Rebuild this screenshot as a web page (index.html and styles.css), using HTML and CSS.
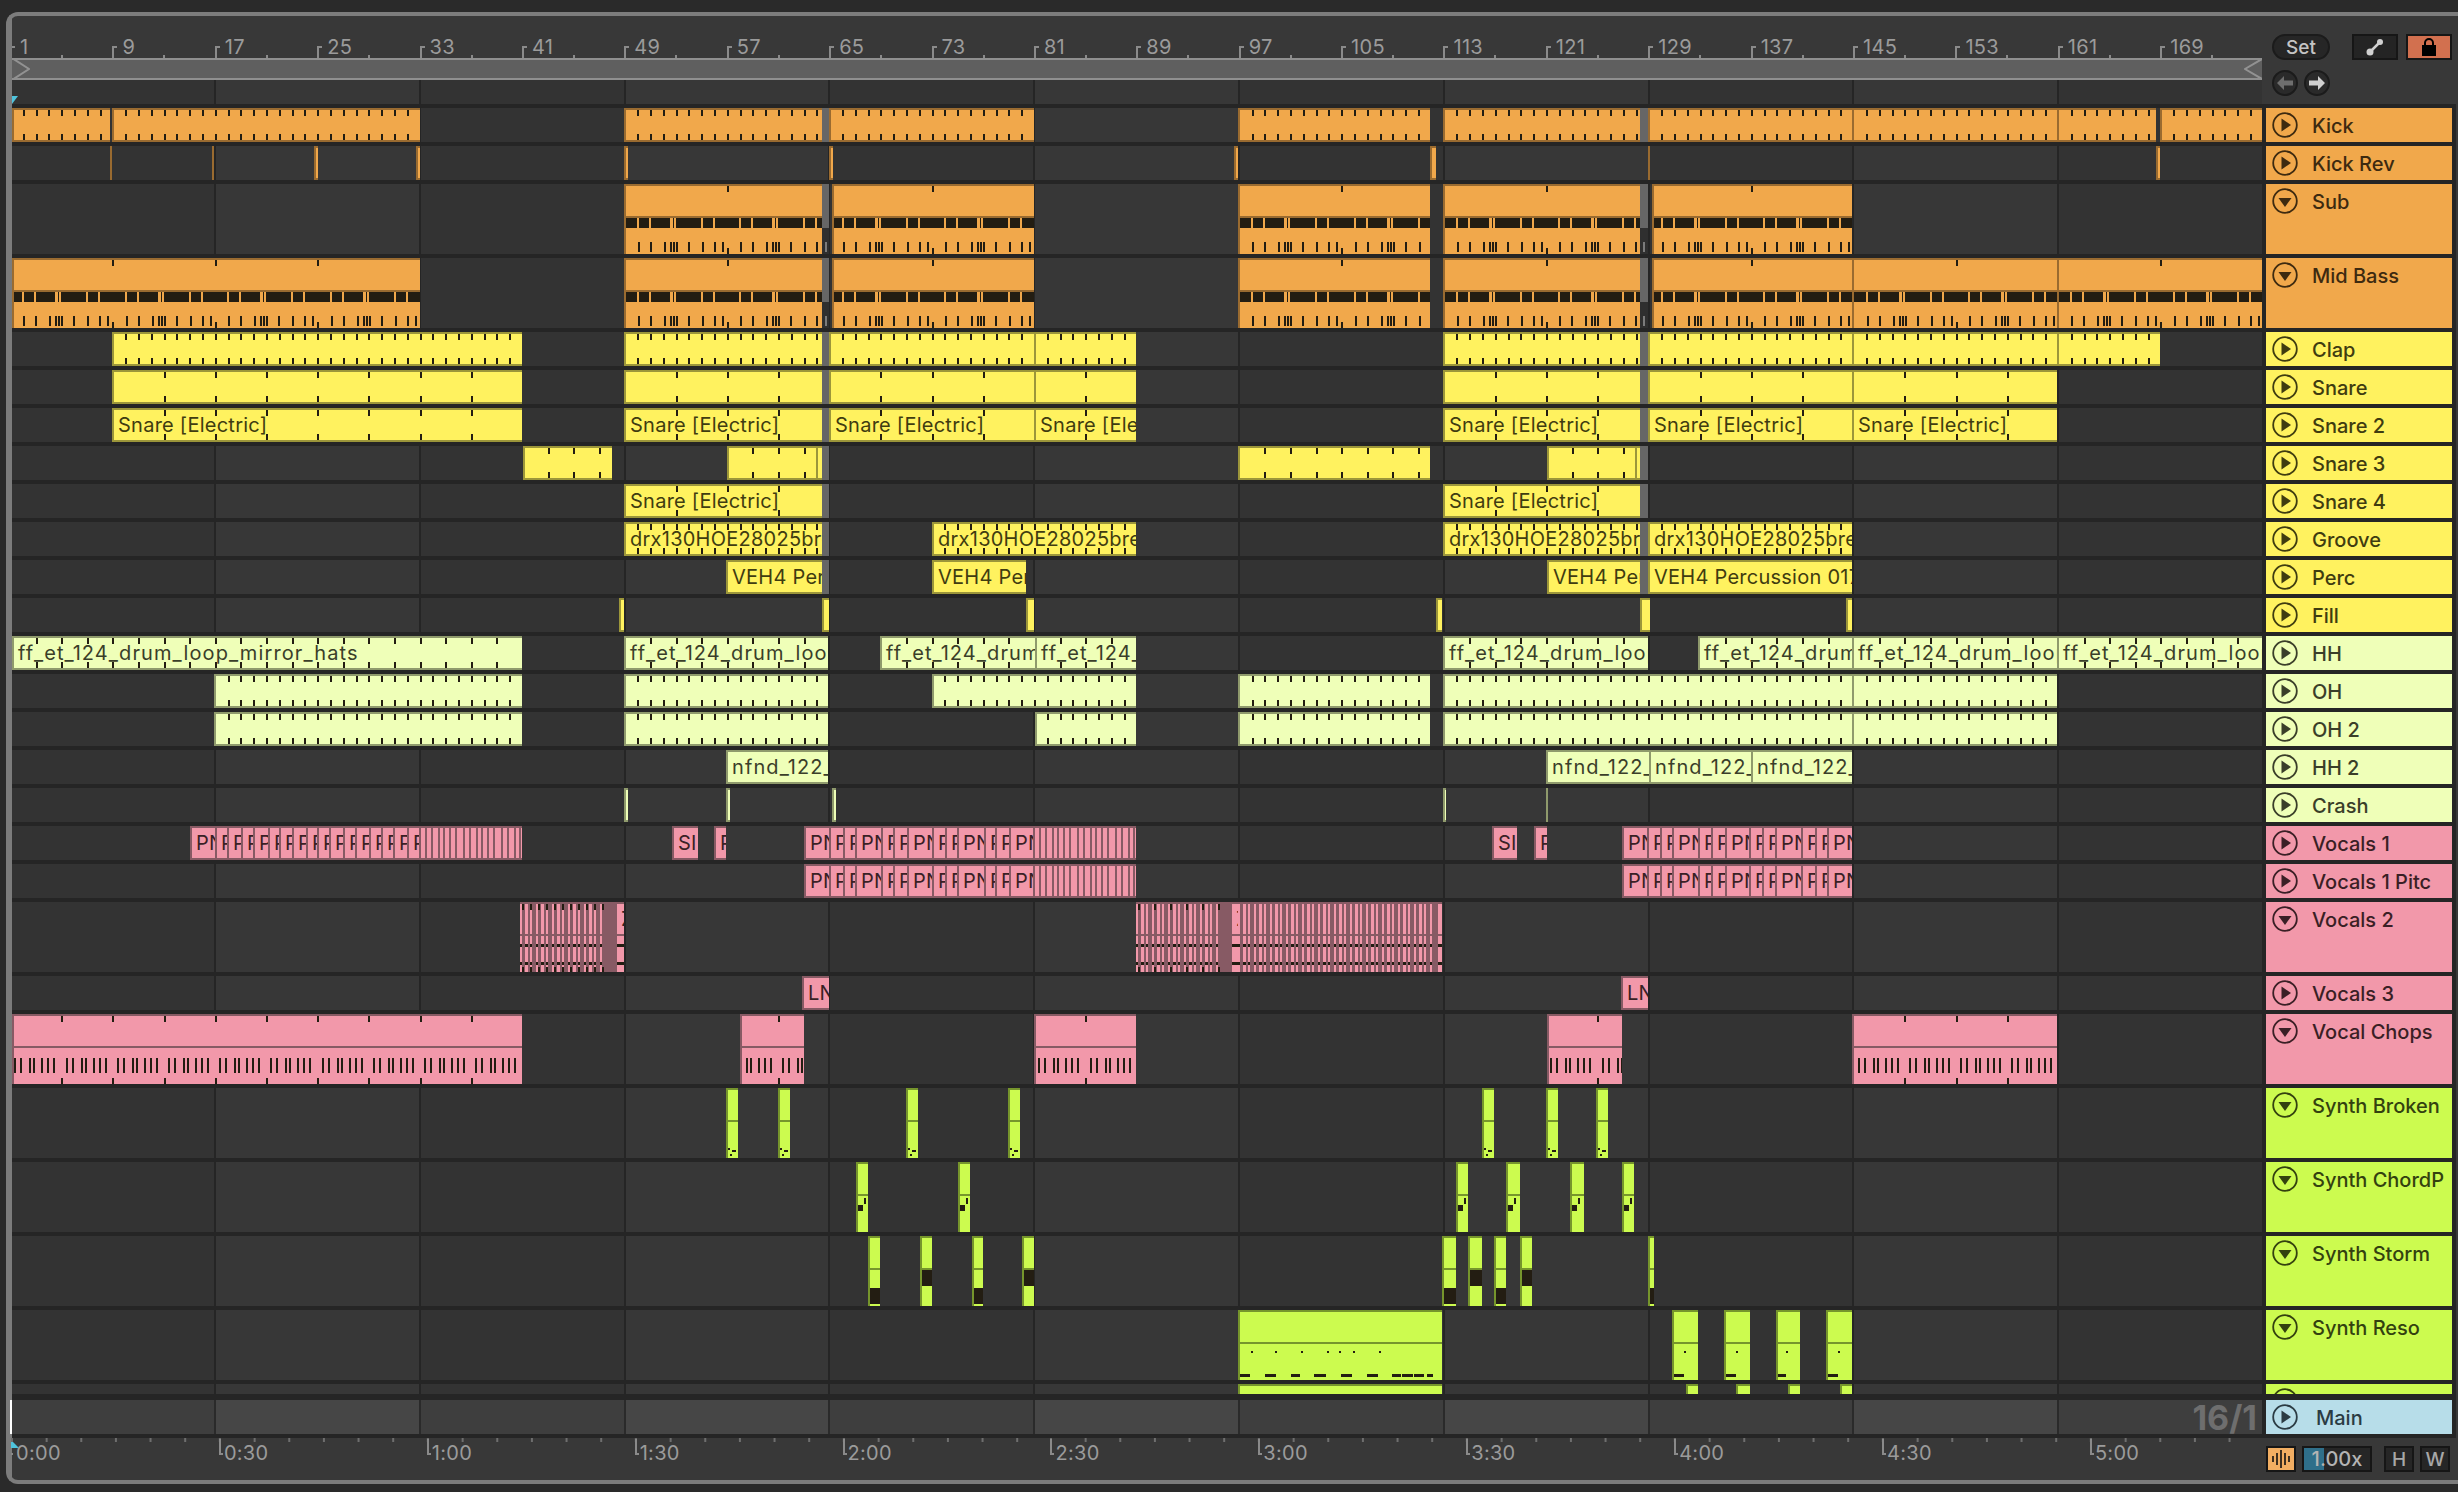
FILE: index.html
```html
<!DOCTYPE html>
<html lang="en">
<head>
    <meta charset="UTF-8">
    <meta name="viewport" content="width=device-width, initial-scale=1.0">
    <title>Arrangement View</title>
    <link rel="stylesheet" href="styles.css">
</head>
<body>
    <div class="frame">
        <div class="top">
            <div class="timeline">
                <div class="ruler" id="barRuler"></div>
                <div class="scrub">
                    <svg width="18" height="22"><path d="M0 0 L17 11 L0 22" fill="none" stroke="#929292" stroke-width="2"/></svg>
                    <svg width="18" height="22"><path d="M18 1 L1 11 L18 21" fill="none" stroke="#929292" stroke-width="2"/></svg>
                </div>
                <div class="locators">
                    <svg width="6" height="8"><path d="M0 0 H6 L0 8 Z" fill="#4fc3dc"/></svg>
                </div>
            </div>
            <div class="controls">
                <div class="controls-row">
                    <button class="set-btn">Set</button>
                    <button class="square-btn link-btn">
                        <svg width="20" height="20" viewBox="0 0 20 20">
                            <path d="M5 15 L15 5" stroke="#d0d0d0" stroke-width="2.5"/>
                            <circle cx="5" cy="15" r="3.5" fill="#d0d0d0"/>
                            <circle cx="15" cy="5" r="3" fill="#d0d0d0"/>
                        </svg>
                    </button>
                    <button class="square-btn lock-btn">
                        <svg width="16" height="20" viewBox="0 0 16 20">
                            <path d="M4 9 V6 A4 4 0 0 1 12 6 V9" fill="none" stroke="#000" stroke-width="2"/>
                            <rect x="1" y="8" width="14" height="11" fill="#000"/>
                        </svg>
                    </button>
                </div>
                <div class="controls-row arrows">
                    <button class="round-btn">
                        <svg width="18" height="16" viewBox="0 0 18 16"><path d="M1 8 L8 1 V5.5 H17 V10.5 H8 V15 Z" fill="#6e6e6e"/></svg>
                    </button>
                    <button class="round-btn">
                        <svg width="18" height="16" viewBox="0 0 18 16"><path d="M17 8 L10 1 V5.5 H1 V10.5 H10 V15 Z" fill="#d0d0d0"/></svg>
                    </button>
                </div>
            </div>
        </div>

        <div class="arrange">
            <div class="tracks" id="tracks"></div>
            <div class="track main-track">
                <div class="lane main-lane"><span class="grid-size">16/1</span></div>
                <div class="head blue">
                    <svg class="fold" width="26" height="26" viewBox="0 0 26 26">
                        <circle cx="13" cy="13" r="11.8" fill="none" stroke="currentColor" stroke-width="1.8"/>
                        <path d="M9.5 6.5 L19 13 L9.5 19.5 Z" fill="currentColor"/>
                    </svg>
                    <span class="track-name main-name">Main</span>
                </div>
            </div>
        </div>

        <div class="bottom">
            <div class="time-ruler">
                <svg class="playhead" width="8" height="8"><path d="M0 0 L8 8 H0 Z" fill="#4fc3dc"/></svg>
                <div class="time-cells" id="timeRuler"></div>
            </div>
            <div class="bottom-controls">
                <button class="small-btn wave-btn">
                    <svg width="20" height="20" viewBox="0 0 20 20">
                        <path d="M2 7 V13 M6 4 V16 M10 1 V19 M14 4 V16 M18 7 V13" stroke="#111" stroke-width="1.6"/>
                    </svg>
                </button>
                <div class="tempo"><span class="tempo-fill"></span><span class="tempo-text">1.00x</span></div>
                <button class="small-btn letter-btn h-btn">H</button>
                <button class="small-btn letter-btn">W</button>
            </div>
        </div>
    </div>

    <script src="app.js"></script>
</body>
</html>
```

FILE: styles.css
```css
html, body {
    margin: 0;
    width: 2458px;
    height: 1492px;
    overflow: hidden;
    background: #2a2a2a;
    font-family: Inter, "Noto Sans", sans-serif;
}
button {
    font-family: inherit;
    padding: 0;
    cursor: pointer;
}
.frame {
    box-sizing: border-box;
    width: 2452px;
    height: 1472px;
    margin: 12px 0 0 6px;
    padding-left: 2px;
    border: solid #7c7c7c;
    border-width: 4px 0 4px 4px;
    border-radius: 12px 0 0 12px;
    background: linear-gradient(90deg, #7c7c7c 2px, #383838 2px);
    overflow: hidden;
}

/* top: ruler, scrub bar, controls */
.top {
    display: flex;
    height: 88px;
}
.timeline {
    width: 2250px;
    flex: none;
    overflow: hidden;
}
.ruler {
    display: flex;
    height: 42px;
    margin-left: -2px;
}
.bar-cell {
    position: relative;
    flex: none;
    box-sizing: border-box;
    width: 102.4px;
    padding: 21px 0 0 10px;
    font-size: 20px;
    line-height: 21px;
    letter-spacing: 0.3px;
    color: #9b9b9b;
}
.bar-cell::before {
    content: "";
    position: absolute;
    left: 0;
    bottom: 0;
    width: 3px;
    height: 10px;
    border: solid #8a8a8a;
    border-width: 2px 0 0 2px;
}
.bar-cell::after {
    content: "";
    position: absolute;
    left: 51px;
    bottom: 0;
    width: 2px;
    height: 3px;
    background: #8a8a8a;
}
.scrub {
    display: flex;
    justify-content: space-between;
    box-sizing: border-box;
    height: 22px;
    border-top: 2px solid #8f8f8f;
    border-bottom: 2px solid #8f8f8f;
    background: #5f5f5f;
    overflow: hidden;
}
.scrub svg {
    margin-top: -2px;
}
.locators {
    display: flex;
    align-items: flex-end;
    height: 24px;
    background: repeating-linear-gradient(90deg, #333 0, #333 202px, #252525 202px, #252525 204px, #373737 204px, #373737 406.8px, #252525 406.8px, #252525 408.8px, #333 408.8px, #333 409.6px);
}
.locators svg {
    display: block;
}
.controls {
    display: flex;
    flex-direction: column;
    gap: 10px;
    padding: 18px 0 0 10px;
}
.controls-row {
    display: flex;
    align-items: center;
    height: 26px;
}
.set-btn {
    width: 58px;
    height: 26px;
    border: 2px solid #1b1b1b;
    border-radius: 13px;
    background: #262626;
    color: #c4c4c4;
    font-size: 19px;
    font-weight: 500;
    margin-right: 22px;
}
.square-btn {
    display: flex;
    align-items: center;
    justify-content: center;
    box-sizing: border-box;
    width: 46px;
    height: 26px;
    border: 2px solid #161616;
}
.link-btn {
    background: #242424;
    margin-right: 8px;
}
.lock-btn {
    background: #d2704f;
}
.arrows {
    gap: 6px;
}
.round-btn {
    display: flex;
    align-items: center;
    justify-content: center;
    box-sizing: border-box;
    width: 26px;
    height: 26px;
    border: 2px solid #1b1b1b;
    border-radius: 50%;
    background: #2a2a2a;
}

/* track rows */
.arrange {
    width: 2444px;
    background: #252525;
    padding: 4px 0;
}
.tracks {
    display: flex;
    flex-direction: column;
    gap: 4px;
    height: 1286px;
    overflow: hidden;
}
.track {
    display: flex;
    flex: none;
    gap: 4px;
    height: 34px;
}
.track.tall {
    height: 70px;
}
.lane {
    position: relative;
    flex: none;
    width: 2250px;
    overflow: hidden;
    background: repeating-linear-gradient(90deg, #333 0, #333 202px, #252525 202px, #252525 204px, #373737 204px, #373737 406.8px, #252525 406.8px, #252525 408.8px, #333 408.8px, #333 409.6px);
}
.head {
    display: flex;
    align-items: flex-start;
    flex: none;
    gap: 14px;
    box-sizing: border-box;
    width: 186px;
    padding: 4px 0 0 6px;
    background: var(--fill);
    color: var(--ink);
    overflow: hidden;
}
.fold {
    flex: none;
}
.track-name {
    margin-top: 1px;
    font-size: 20px;
    font-weight: 500;
    line-height: 26px;
    white-space: nowrap;
}
.main-track {
    margin-top: 6px;
}
.main-lane {
    display: flex;
    align-items: center;
    justify-content: flex-end;
    padding-right: 5px;
    box-sizing: border-box;
    box-shadow: -2px 0 0 #fff;
    overflow: visible;
    background: repeating-linear-gradient(90deg, #3e3e3e 0, #3e3e3e 202px, #2a2a2a 202px, #2a2a2a 204px, #464646 204px, #464646 406.8px, #2a2a2a 406.8px, #2a2a2a 408.8px, #3e3e3e 408.8px, #3e3e3e 409.6px);
}
.grid-size {
    font-size: 34px;
    font-weight: 700;
    color: #6e6e6e;
}
.main-name {
    margin-left: 4px;
}

/* clip colours */
.orange { --fill: #f1a84b; --edge: #9a6b30; --ink: #3d2a10; }
.yellow { --fill: #fff25f; --edge: #9c963a; --ink: #3f3c10; }
.pale { --fill: #efffb8; --edge: #8f9a6c; --ink: #3a3e29; }
.pink { --fill: #f298aa; --edge: #875a64; --ink: #3a1f25; }
.lime { --fill: #ccfb4f; --edge: #76952c; --ink: #33410f; }
.blue { --fill: #b7dde9; --ink: #2b3b43; }

/* clips */
.clip {
    position: absolute;
    top: 0;
    bottom: 0;
    box-sizing: border-box;
    border: solid var(--edge);
    border-width: 2px 0 2px 2px;
    background: var(--fill);
    color: var(--ink);
    overflow: hidden;
}
.clip.open {
    border-bottom-width: 0;
}
.clip.thin {
    background: var(--edge);
    border-width: 0;
}
.clip.strips {
    background: var(--edge);
    border-left-width: 0;
    border-bottom-width: 0;
}
.clip.ghost {
    border: 0;
    background: #666;
}
.clip.ghost.open {
    background: linear-gradient(#666 0, #666 44px, #2f2f2f 44px);
}
.clip svg {
    position: absolute;
    left: -2px;
    top: -2px;
    fill: #231d12;
}
.clip.thin svg, .clip.ghost svg {
    left: 0;
    top: 0;
}
.clip .line {
    fill: var(--edge);
}
.clip .paint {
    fill: var(--fill);
}
.clip .mark {
    fill: #7b7b7b;
}
.clip-name {
    position: relative;
    display: block;
    padding-left: 4px;
    height: 30px;
    font-size: 20px;
    line-height: 30px;
    letter-spacing: 0.25px;
    white-space: nowrap;
}
.pale .clip-name {
    letter-spacing: 1.1px;
}

/* bottom: time ruler and small buttons */
.bottom {
    display: flex;
    height: 42px;
}
.time-ruler {
    position: relative;
    flex: none;
    width: 2250px;
    margin-left: -1px;
    overflow: hidden;
}
.time-cells {
    display: flex;
}
.playhead {
    position: absolute;
    left: 0;
    top: 2px;
}
.time-cell {
    position: relative;
    flex: none;
    box-sizing: border-box;
    width: 207.9px;
    padding: 4px 0 0 5px;
    font-size: 20px;
    line-height: 22px;
    letter-spacing: 0.3px;
    color: #9b9b9b;
    background: linear-gradient(90deg, #6e6e6e 2px, transparent 2px) 0 0 / 34.65px 4px repeat-x;
}
.time-cell::before {
    content: "";
    position: absolute;
    left: 0;
    top: 1px;
    width: 2px;
    height: 14px;
    border: solid #8a8a8a;
    border-width: 0 0 2px 2px;
}
.time-cell:first-child::before {
    border-left: 0;
}
.bottom-controls {
    display: flex;
    align-items: center;
    height: 26px;
    margin: 8px 0 0 5px;
}
.small-btn {
    display: flex;
    align-items: center;
    justify-content: center;
    box-sizing: border-box;
    width: 30px;
    height: 26px;
    border: 2px solid #161616;
    background: #262626;
    color: #a8a8a8;
    font-size: 19px;
    font-weight: 500;
}
.wave-btn {
    background: #f2ae62;
}
.tempo {
    position: relative;
    display: flex;
    align-items: center;
    justify-content: center;
    box-sizing: border-box;
    width: 70px;
    height: 26px;
    margin: 0 12px 0 6px;
    border: 2px solid #161616;
    background: #262626;
    color: #b4b4b4;
    font-size: 20px;
    font-weight: 500;
}
.tempo-fill {
    position: absolute;
    left: 0;
    top: 0;
    bottom: 0;
    width: 20px;
    background: #2f6f8a;
}
.tempo-text {
    position: relative;
}
.h-btn {
    margin-right: 6px;
}
```

FILE: app.js
```js
// Arrangement view: tracks and clips are built from the tables below.
// All clip positions are in page pixels, one bar is 12.8px wide.
const LANE_LEFT = 12;
const BAR_WIDTH = 12.8;

function barX(bar) {
    return 9.4 + (bar - 1) * BAR_WIDTH;
}

function rect(x, y, w, h, cls) {
    const c = cls ? ` class="${cls}"` : '';
    return `<rect x="${x}" y="${y}" width="${w}" height="${h}"${c}/>`;
}

// short ticks at a regular bar step, on the global grid
function gridTicks(x0, x1, step, rows) {
    let out = '';
    for (let bar = 1; bar < 180; bar += step) {
        const x = Math.round(barX(bar) + 0.6);
        if (x <= x0 + 3 || x >= x1 - 1) continue;
        rows.forEach(function (r) {
            out += rect(x - x0, r[0], 2, r[1]);
        });
    }
    return out;
}

// a pattern that repeats every few bars
function patternTicks(x0, x1, offsets, period, y, h, cls) {
    let out = '';
    const start = barX(1) + Math.floor((x0 - barX(1)) / period) * period;
    for (let base = start; base < x1; base += period) {
        offsets.forEach(function (o) {
            const x = Math.round(base + o[0]);
            if (x > x0 + 1 && x < x1) out += rect(x - x0, y, o[1], h, cls);
        });
    }
    return out;
}

const BASS_BAND = [[13, 2], [25, 2], [46, 3], [50, 2], [77, 2], [89, 2]];
const BASS_TICKS = [[14, 2], [26, 2], [40, 2], [46, 2], [49, 2], [52, 2], [64, 2], [78, 2], [90, 2], [98, 2]];
const CHOP_TICKS = [[5, 2], [11, 2], [20, 2], [24, 2], [32, 2], [38, 2], [44, 2]];

function bassClip(x0, x1) {
    let s = rect(0, 32, x1 - x0, 2, 'line');
    s += rect(0, 34, x1 - x0, 10);
    s += patternTicks(x0, x1, BASS_BAND, 102.4, 34, 10, 'paint');
    s += patternTicks(x0, x1, BASS_TICKS, 102.4, 58, 10);
    s += gridTicks(x0, x1, 8, [[2, 6], [64, 6]]);
    return s;
}

function chopClip(x0, x1) {
    let s = rect(0, 32, x1 - x0, 2, 'line');
    s += patternTicks(x0, x1, CHOP_TICKS, 51.2, 44, 15);
    s += gridTicks(x0, x1, 4, [[2, 6], [64, 6]]);
    return s;
}

// thin stripes after the last named slice of a vocal run
function stripes(x0, x1) {
    let s = '';
    const steps = [6, 7, 5, 6, 6, 8];
    let x = 6;
    let i = 0;
    while (x < x1 - x0) {
        s += rect(x, 0, 2, 34, 'line');
        x += steps[i % steps.length];
        i++;
    }
    return s;
}

function voxStrips(x0, x1, withTicks) {
    let s = '';
    let x = 2;
    let i = 0;
    while (x < x1 - x0 - 1) {
        const w = i % 3 === 1 ? 3 : 2;
        s += rect(x, 2, w, 30, 'paint');
        s += rect(x, 34, w, 36, 'paint');
        s += rect(x, 42, w, 3);
        s += rect(x, 60, w, 3);
        x += i % 3 === 2 ? 6 : 5;
        i++;
    }
    if (withTicks) {
        for (let t = 4; t < x1 - x0; t += withTicks) {
            s += rect(t, 2, 2, 6);
            s += rect(t, 65, 2, 5);
        }
    }
    return s;
}

function voxEnd(w) {
    return rect(0, 32, w, 2, 'line') + rect(0, 42, w, 3) + rect(0, 60, w, 3);
}

function synthClip(extra) {
    return function (x0, x1) {
        return rect(0, 32, x1 - x0, 2, 'line') + (extra || '');
    };
}

function dots(list) {
    return list.map(function (d) { return rect(d[0], d[1], d[2], d[3]); }).join('');
}

function cells(edges) {
    const out = [];
    for (let i = 0; i < edges.length - 1; i++) {
        const w = edges[i + 1] - edges[i];
        out.push([edges[i], edges[i + 1], w >= 20 ? 'PN' : 'P']);
    }
    return out;
}

function tail(x0, x1) {
    return [x0, x1, '', stripes];
}

const VOCALS_A = cells([804, 829, 843, 855, 881, 893, 907, 932, 945, 957, 984, 995, 1009, 1033]);
const VOCALS_B = cells([1622, 1647, 1660, 1672, 1698, 1711, 1725, 1749, 1762, 1775, 1801, 1815, 1827, 1852]);
const VOCALS_INTRO = cells([190, 215, 227, 241, 253, 268, 279, 292, 306, 317, 329, 343, 355, 369, 381, 393, 407, 419]);

const SN = 'Snare [Electric]';
const DRX = 'drx130HOE28025breakbeat';
const PERC = 'VEH4 Percussion 017';
const FF = 'ff_et_124_drum_loop_mirror_hats';
const NF = 'nfnd_122_break';

const TRACKS = [
    { name: 'Kick', color: 'orange', step: 1, ghost: true, clips: [[12, 110], [112, 420], [624, 822], [829, 1034], [1238, 1430], [1443, 1640], [1648, 1852], [1852, 2057], [2057, 2156], [2160, 2262]] },
    { name: 'Kick Rev', color: 'orange', clips: [[110, 112, '', 'thin'], [212, 214, '', 'thin'], [314, 318], [416, 420], [624, 628], [829, 833], [1234, 1238], [1430, 1436], [1648, 1650, '', 'thin'], [2156, 2160]] },
    { name: 'Sub', color: 'orange', open: true, ghost: true, clips: [[624, 822, '', bassClip], [832, 1034, '', bassClip], [1238, 1430, '', bassClip], [1443, 1640, '', bassClip], [1652, 1852, '', bassClip]] },
    { name: 'Mid Bass', color: 'orange', open: true, ghost: true, clips: [[12, 420, '', bassClip], [624, 822, '', bassClip], [832, 1034, '', bassClip], [1238, 1430, '', bassClip], [1443, 1640, '', bassClip], [1652, 1852, '', bassClip], [1852, 2057, '', bassClip], [2057, 2262, '', bassClip]] },
    { name: 'Clap', color: 'yellow', step: 1, ghost: true, clips: [[112, 522], [624, 822], [829, 1034], [1034, 1136], [1443, 1640], [1648, 1852], [1852, 2057], [2057, 2160]] },
    { name: 'Snare', color: 'yellow', step: 4, ghost: true, clips: [[112, 522], [624, 822], [829, 1034], [1034, 1136], [1443, 1640], [1648, 1852], [1852, 2057]] },
    { name: 'Snare 2', color: 'yellow', step: 4, ghost: true, clips: [[112, 522, SN], [624, 822, SN], [829, 1034, SN], [1034, 1136, SN], [1443, 1640, SN], [1648, 1852, SN], [1852, 2057, SN]] },
    { name: 'Snare 3', color: 'yellow', step: 2, ghost: true, clips: [[523, 612], [727, 816], [816, 822], [1238, 1430], [1547, 1635], [1635, 1640]] },
    { name: 'Snare 4', color: 'yellow', step: 4, ghost: true, clips: [[624, 822, SN], [1443, 1640, SN]] },
    { name: 'Groove', color: 'yellow', step: 1, ghost: true, clips: [[624, 822, DRX], [932, 1136, DRX], [1443, 1640, DRX], [1648, 1852, DRX]] },
    { name: 'Perc', color: 'yellow', ghost: true, clips: [[726, 822, PERC], [932, 1026, PERC], [1547, 1640, PERC], [1648, 1852, PERC]] },
    { name: 'Fill', color: 'yellow', clips: [[619, 624], [822, 829], [1026, 1034], [1436, 1442], [1640, 1650], [1846, 1852]] },
    { name: 'HH', color: 'pale', step: 2, clips: [[12, 522, FF], [624, 828, FF], [880, 1035, FF], [1035, 1136, FF], [1443, 1648, FF], [1698, 1852, FF], [1852, 2057, FF], [2057, 2262, FF]] },
    { name: 'OH', color: 'pale', step: 1, clips: [[214, 522], [624, 828], [932, 1136], [1238, 1430], [1443, 1852], [1852, 2057]] },
    { name: 'OH 2', color: 'pale', step: 1, clips: [[214, 522], [624, 828], [1035, 1136], [1238, 1430], [1443, 1852], [1852, 2057]] },
    { name: 'HH 2', color: 'pale', clips: [[726, 828, NF], [1546, 1649, NF], [1649, 1751, NF], [1751, 1852, NF]] },
    { name: 'Crash', color: 'pale', clips: [[624, 628], [726, 730], [832, 836], [1443, 1446], [1546, 1548, '', 'thin']] },
    { name: 'Vocals 1', color: 'pink', clips: VOCALS_INTRO.concat([tail(419, 522), [672, 698, 'SI'], [714, 726, 'P']], VOCALS_A, [tail(1033, 1136), [1492, 1517, 'SI'], [1534, 1547, 'P']], VOCALS_B) },
    { name: 'Vocals 1 Pitc', color: 'pink', clips: VOCALS_A.concat([tail(1033, 1136)], VOCALS_B) },
    { name: 'Vocals 2', color: 'pink', open: true, clips: [
        [520, 615, '', 'strips', function (a, b) { return voxStrips(a, b - 8, 8); }],
        [615, 624, 'Z', '', function (a, b) { return voxEnd(b - a); }],
        [1136, 1230, '', 'strips', function (a, b) { return voxStrips(a, b - 8, 16); }],
        [1230, 1238, 'Z', '', function (a, b) { return voxEnd(b - a); }],
        [1238, 1436, '', 'strips', function (a, b) { return voxStrips(a, b, 0); }],
        [1436, 1442, '', '', function (a, b) { return voxEnd(b - a); }]
    ] },
    { name: 'Vocals 3', color: 'pink', clips: [[802, 829, 'LN'], [1621, 1648, 'LN']] },
    { name: 'Vocal Chops', color: 'pink', open: true, clips: [[12, 522, '', chopClip], [740, 804, '', chopClip], [1034, 1136, '', chopClip], [1547, 1622, '', chopClip], [1852, 2057, '', chopClip]] },
    { name: 'Synth Broken', color: 'lime', open: true, clips: [726, 778, 906, 1008, 1482, 1546, 1596].map(function (x) {
        return [x, x + 12, '', synthClip(dots([[2, 60, 2, 2], [6, 62, 4, 2], [4, 66, 2, 2]]))];
    }) },
    { name: 'Synth ChordP', color: 'lime', open: true, clips: [[856, 868], [958, 970], [1456, 1468], [1506, 1520], [1570, 1584], [1622, 1634]].map(function (c) {
        return [c[0], c[1], '', synthClip(dots([[8, 36, 2, 6], [2, 43, 5, 6]]))];
    }) },
    { name: 'Synth Storm', color: 'lime', open: true, clips: [[868, 880, 1], [920, 932, 0], [972, 983, 1], [1022, 1034, 0], [1442, 1456, 1], [1468, 1482, 0], [1494, 1506, 1], [1520, 1532, 0], [1648, 1654, 1]].map(function (c) {
        const y = c[2] ? 52 : 34;
        return [c[0], c[1], '', synthClip(rect(2, y, c[1] - c[0], 16))];
    }) },
    { name: 'Synth Reso', color: 'lime', open: true, clips: [
        [1238, 1442, '', synthClip(dots([[13, 41, 2, 2], [37, 41, 2, 2], [63, 41, 2, 2], [89, 41, 2, 2], [101, 41, 2, 2], [115, 41, 2, 2], [141, 41, 2, 2],
            [2, 64, 10, 3], [27, 64, 11, 3], [53, 64, 9, 3], [76, 64, 12, 3], [103, 64, 11, 3], [129, 64, 11, 3], [154, 64, 9, 3], [164, 64, 11, 3], [176, 64, 10, 3], [189, 64, 6, 3]]))],
        [1672, 1698, '', synthClip(dots([[12, 41, 2, 2], [2, 64, 10, 3]]))],
        [1724, 1750, '', synthClip(dots([[12, 41, 2, 2], [2, 64, 10, 3]]))],
        [1776, 1800, '', synthClip(dots([[10, 41, 2, 2], [2, 64, 8, 3]]))],
        [1826, 1852, '', synthClip(dots([[12, 41, 2, 2], [2, 64, 10, 3]]))]
    ] },
    { name: 'Lead Delay', color: 'lime', open: true, clips: [[1238, 1442], [1686, 1698], [1736, 1750], [1788, 1800], [1840, 1852]] }
];

const GHOST_SPOTS = [[822, 829], [1640, 1648]];

function foldIcon(open) {
    const shape = open ? 'M6.5 10 H19.5 L13 19 Z' : 'M9.5 6.5 L19 13 L9.5 19.5 Z';
    return `<svg class="fold" width="26" height="26" viewBox="0 0 26 26">
        <circle cx="13" cy="13" r="11.8" fill="none" stroke="currentColor" stroke-width="1.8"/>
        <path d="${shape}" fill="currentColor"/></svg>`;
}

function clipHtml(track, c) {
    const x0 = c[0];
    const x1 = c[1];
    const label = c[2] || '';
    const h = track.open ? 70 : 34;
    let cls = track.open ? 'clip open' : 'clip';
    let paint = null;
    // fourth and fifth fields: a class name and/or a painter
    [c[3], c[4]].forEach(function (f) {
        if (typeof f === 'string' && f) cls += ' ' + f;
        if (typeof f === 'function') paint = f;
    });

    let inner = '';
    if (paint) {
        inner = paint(x0, x1);
    } else if (track.step) {
        inner = gridTicks(x0, x1, track.step, [[2, 6], [26, 6]]);
    }
    const svg = inner ? `<svg width="${x1 - x0 + 2}" height="${h}" shape-rendering="crispEdges">${inner}</svg>` : '';
    const name = label ? `<span class="clip-name">${label}</span>` : '';
    return `<div class="${cls}" style="left:${x0 - LANE_LEFT}px;width:${x1 - x0}px">${svg}${name}</div>`;
}

function ghostHtml(track, spot) {
    let inner = '';
    if (track.open) {
        inner = `<svg width="8" height="70" shape-rendering="crispEdges">${rect(3, 58, 2, 10, 'mark')}</svg>`;
    }
    const cls = track.open ? 'clip ghost open' : 'clip ghost';
    return `<div class="${cls}" style="left:${spot[0] - LANE_LEFT}px;width:${spot[1] - spot[0]}px">${inner}</div>`;
}

function buildTracks() {
    const parts = TRACKS.map(function (track) {
        let clips = track.clips.map(function (c) { return clipHtml(track, c); }).join('');
        if (track.ghost) {
            clips += GHOST_SPOTS.map(function (s) { return ghostHtml(track, s); }).join('');
        }
        return `<div class="track ${track.open ? 'tall' : ''} ${track.color}">
            <div class="lane">${clips}</div>
            <div class="head">${foldIcon(track.open)}<span class="track-name">${track.name}</span></div>
        </div>`;
    });
    document.getElementById('tracks').innerHTML = parts.join('');
}

function buildRulers() {
    let bars = '';
    for (let bar = 1; bar <= 169; bar += 8) {
        bars += `<div class="bar-cell">${bar}</div>`;
    }
    document.getElementById('barRuler').innerHTML = bars;

    let times = '';
    for (let sec = 0; sec <= 330; sec += 30) {
        const m = Math.floor(sec / 60);
        const s = String(sec % 60).padStart(2, '0');
        times += `<div class="time-cell">${m}:${s}</div>`;
    }
    document.getElementById('timeRuler').innerHTML = times;
}

buildRulers();
buildTracks();
```
